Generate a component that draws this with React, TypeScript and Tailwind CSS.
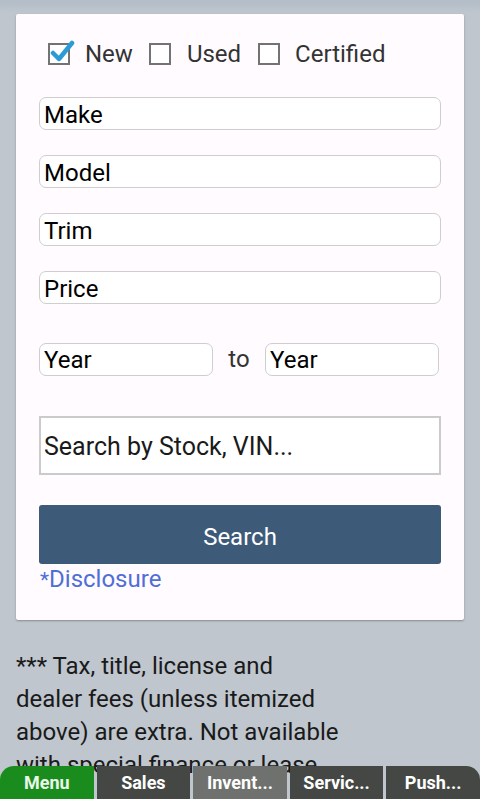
import React from "react";

function Box({ checked }: { checked?: boolean }) {
  return (
    <div className="relative w-[22px] h-[22px]">
      <div className="absolute left-0 top-0 w-[22px] h-[22px] border-2 border-[#737373] bg-white" />
      {checked && (
        <svg className="absolute left-[2px] top-[-4px]" width="26" height="24" viewBox="0 0 26 24">
          <path d="M3 14 L9 20 L22 4" fill="none" stroke="#2b9bd8" strokeWidth="4.5" strokeLinecap="round" strokeLinejoin="round" />
        </svg>
      )}
    </div>
  );
}

function Field({ label, className = "" }: { label: string; className?: string }) {
  return (
    <div className={`h-[33px] border border-[#cfcdd0] rounded-[7px] bg-white flex items-center pl-[4px] pt-[2px] text-[24px] text-black leading-none ${className}`}>
      {label}
    </div>
  );
}

export default function App() {
  const font = { fontFamily: "Roboto, 'Noto Sans', sans-serif" };
  return (
    <div style={font} className="h-[799px] bg-[#bfc6ce] relative overflow-hidden">
      <div className="h-[14px] bg-gradient-to-b from-[#b3bdc7] to-[#bfc6ce]" />
      <div className="mx-[16px] bg-[#fffbfe] rounded-[2px] shadow-[0_1px_2px_rgba(0,0,0,0.3)] px-[23px] pt-[28px] h-[606px]">
        <div className="flex items-center h-[24px] pl-[9px] text-[24px] text-[#333]">
          <Box checked />
          <span className="ml-[15px]">New</span>
          <div className="ml-[16px]"><Box /></div>
          <span className="ml-[16px]">Used</span>
          <div className="ml-[17px]"><Box /></div>
          <span className="ml-[15px]">Certified</span>
        </div>
        <Field label="Make" className="mt-[31px]" />
        <Field label="Model" className="mt-[25px]" />
        <Field label="Trim" className="mt-[25px]" />
        <Field label="Price" className="mt-[25px]" />
        <div className="flex items-center mt-[37px]">
          <Field label="Year" className="w-[174px]" />
          <span className="w-[52px] text-center text-[24px] text-[#333]">to</span>
          <Field label="Year" className="w-[174px]" />
        </div>
        <div className="mt-[39px] h-[59px] border-2 border-[#cbcbcb] bg-white flex items-center pl-[3px] pt-[2px] text-[25px] text-[#1a1a1a]">
          Search by Stock, VIN...
        </div>
        <div className="mt-[30px] h-[59px] bg-[#3d5a78] rounded-[3px] flex items-center justify-center text-white text-[24px] pt-[4px]">
          Search
        </div>
        <div className="text-[24px] text-[#4f6fd6] leading-[31px] pl-[1px]">
          <span className="text-[21px]">*</span>Disclosure
        </div>
      </div>
      <div className="mt-[30px] ml-[16px] text-[24px] leading-[33px] text-[#1a1a1a] whitespace-nowrap">
        <div>*** Tax, title, license and</div>
        <div>dealer fees (unless itemized</div>
        <div>above) are extra. Not available</div>
        <div>with special finance or lease</div>
      </div>
      <div className="absolute left-0 right-0 bottom-0 h-[33px] flex gap-[3px] text-[18px] font-bold text-white">
        <div className="flex-1 bg-[#1a8c1e] rounded-tl-[14px] flex items-center justify-center text-[#e9f7e9]">Menu</div>
        <div className="flex-1 bg-[#454744] flex items-center justify-center">Sales</div>
        <div className="flex-1 bg-[#6f716e] flex items-center justify-center">Invent...</div>
        <div className="flex-1 bg-[#454744] flex items-center justify-center">Servic...</div>
        <div className="flex-1 bg-[#454744] rounded-tr-[14px] flex items-center justify-center">Push...</div>
      </div>
    </div>
  );
}
